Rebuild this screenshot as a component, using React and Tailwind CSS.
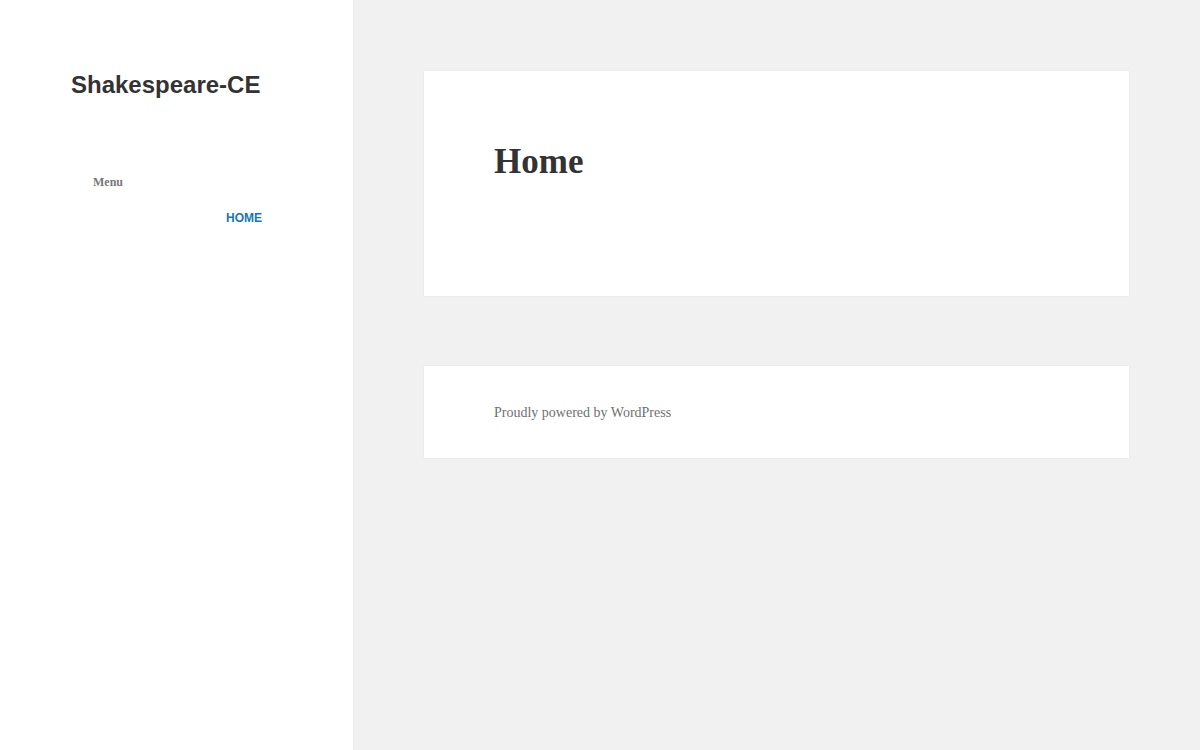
export default function App() {
  return (
    <div className="flex min-h-[750px] bg-[#f1f1f1]">
      {/* Sidebar */}
      <aside className="w-[353px] shrink-0 bg-white shadow-[0_0_1px_rgba(0,0,0,0.15)] min-h-[750px]">
        <div className="pt-[70px] pl-[71px]">
          <h1 className="font-['Liberation_Sans',Arial,sans-serif] font-bold text-[24px] leading-[30px] text-[#333333]">
            Shakespeare-CE
          </h1>
        </div>
        <nav className="mt-[74px] pl-[93px] w-[262px]">
          <p className="font-['Liberation_Serif','Times_New_Roman',serif] font-bold text-[12px] leading-[16px] text-[#777777]">
            Menu
          </p>
          <ul className="mt-[14px] text-right">
            <li>
              <a href="#" className="font-['Liberation_Sans',Arial,sans-serif] font-bold text-[12px] leading-[16px] text-[#1477b9]">
                HOME
              </a>
            </li>
          </ul>
        </nav>
      </aside>

      {/* Main */}
      <main className="flex-1 p-[71px] flex flex-col gap-[70px]">
        <article className="bg-white h-[225px] shadow-[0_0_1px_rgba(0,0,0,0.12)] pt-[69px] pl-[70px]">
          <h2 className="font-['Liberation_Serif','Times_New_Roman',serif] font-bold text-[35px] leading-[44px] text-[#333333]">
            Home
          </h2>
        </article>
        <footer className="bg-white h-[92px] shadow-[0_0_1px_rgba(0,0,0,0.12)] pl-[70px] pt-[2px] flex items-center">
          <a href="#" className="font-['Liberation_Serif','Times_New_Roman',serif] text-[14px] leading-[20px] text-[#707070]">
            Proudly powered by WordPress
          </a>
        </footer>
      </main>
    </div>
  )
}
